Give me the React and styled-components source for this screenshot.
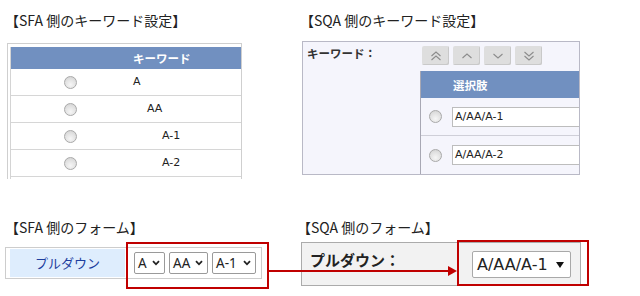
import React from "react";
import styled, { createGlobalStyle } from "styled-components";

const Global = createGlobalStyle`
  html, body { margin: 0; padding: 0; background: #fff; }
  body { font-family: "Noto Sans CJK JP", "Noto Sans", sans-serif; color: #222; }
  * { box-sizing: border-box; }
`;

const Page = styled.div`
  position: relative;
  width: 640px;
  height: 296px;
  overflow: hidden;
  padding-top: 12px;
`;

const Section = styled.div`
  display: grid;
  grid-template-columns: ${(p) => p.$left}px 1fr;
  height: ${(p) => p.$h}px;
  padding-top: ${(p) => p.$pt || 0}px;
`;

const Column = styled.div`
  display: flex;
  flex-direction: column;
  align-items: flex-start;
  padding-left: ${(p) => p.$pl || 0}px;
`;

const Title = styled.div`
  font-size: 14px;
  line-height: 16px;
  height: 16px;
  color: #222;
  white-space: nowrap;
`;

/* ---------- SFA keyword table ---------- */
const Frame = styled.div`
  margin-top: 15px;
  margin-left: 2px;
  width: 235px;
  height: 136px;
  border: 1px solid #cfcfcf;
  border-bottom: none;
  padding: 3px 0 0 2px;
  overflow: hidden;
`;

const KTable = styled.div`
  border-left: 1px solid #d4d4d4;
  height: 200px;
`;

const KRow = styled.div`
  display: grid;
  grid-template-columns: 118px 1fr;
  align-items: center;
  height: ${(p) => (p.$head ? 22 : 27)}px;
  background: ${(p) => (p.$head ? "#7190c0" : "#fff")};
  border-bottom: ${(p) => (p.$head ? "none" : "1px solid #d6d6d6")};
`;

const HeadText = styled.div`
  color: #fff;
  font-weight: 700;
  font-size: 11.5px;
  line-height: 14px;
  padding-left: ${(p) => p.$pl || 0}px;
  white-space: nowrap;
`;

const RadioCell = styled.div`
  display: flex;
  justify-content: center;
`;

const Radio = styled.span`
  display: inline-block;
  width: 13px;
  height: 13px;
  border-radius: 50%;
  border: 1px solid #a9a9a9;
  background: radial-gradient(circle at 50% 70%, #f6f6f6 0%, #e2e2e2 55%, #cfcfcf 100%);
  flex: none;
`;

const KeyText = styled.div`
  font-family: "DejaVu Sans", Verdana, sans-serif;
  font-size: 11px;
  line-height: 14px;
  color: #222;
  padding-left: ${(p) => 4 + p.$indent}px;
`;

/* ---------- SQA keyword box ---------- */
const SBox = styled.div`
  margin-top: 13px;
  margin-left: 2px;
  width: 278px;
  height: 134px;
  border: 1px solid #b9b9c6;
  background: #f5f5fc;
  display: grid;
  grid-template-columns: 117px 1fr;
  overflow: hidden;
`;

const SLabel = styled.div`
  font-size: 11.5px;
  font-weight: 700;
  line-height: 14px;
  padding: 4px 0 0 4px;
  color: #333;
  white-space: nowrap;
`;

const SRight = styled.div`
  display: flex;
  flex-direction: column;
  min-width: 0;
`;

const BtnRow = styled.div`
  display: flex;
  gap: 4px;
  padding: 4px 0 0 2px;
  height: 29px;
`;

const OrderBtn = styled.div`
  width: 27px;
  height: 19px;
  border-radius: 2px;
  background: #dedede;
  box-shadow: inset -1px -1px 0 #c9c9c9;
  display: flex;
  align-items: center;
  justify-content: center;
`;

const STable = styled.div`
  border-left: 1px solid #a8a8b4;
  flex: 1;
  width: 240px;
`;

const SHead = styled.div`
  height: 27px;
  background: #7190c0;
  display: flex;
  align-items: center;
`;

const SRow = styled.div`
  height: 38px;
  display: flex;
  align-items: center;
  gap: 10px;
  padding-left: 8px;
  border-bottom: ${(p) => (p.$last ? "none" : "1px solid #cfcfd8")};
`;

const TextInput = styled.div`
  width: 200px;
  height: 20px;
  border: 1px solid #bdbdbd;
  background: #fff;
  font-family: "DejaVu Sans", Verdana, sans-serif;
  font-size: 11px;
  line-height: 18px;
  padding-left: 2px;
  color: #222;
  flex: none;
`;

/* ---------- SFA form ---------- */
const FormA = styled.div`
  margin-top: 12px;
  width: 257px;
  height: 32px;
  border: 1px solid #cdcdcd;
  padding: 1px 0 1px 4px;
  display: flex;
  align-items: stretch;
`;

const FormALabel = styled.div`
  width: 115px;
  background: #deedfd;
  color: #1d3e9e;
  font-size: 13px;
  display: flex;
  align-items: center;
  justify-content: center;
  padding-bottom: 2px;
`;

const SelectGroup = styled.div`
  display: flex;
  align-items: center;
  gap: 4px;
  margin-left: 9px;
`;

const MiniSelect = styled.div`
  width: ${(p) => p.$w}px;
  height: 22px;
  border: 1px solid #9a9a9a;
  border-radius: 2px;
  background: #fff;
  display: flex;
  align-items: center;
  justify-content: space-between;
  padding: 0 4px 0 3px;
  font-family: "Noto Sans", "DejaVu Sans", sans-serif;
  font-size: 13.5px;
  color: #222;
`;

/* ---------- SQA form ---------- */
const FormB = styled.div`
  margin-top: 7px;
  margin-left: 4px;
  width: 280px;
  height: 44px;
  border: 1px solid #ababab;
  background: #f2f2f2;
  display: flex;
  align-items: flex-start;
`;

const FormBLabel = styled.div`
  width: 170px;
  padding: 7px 0 0 8px;
  font-size: 15px;
  font-weight: 700;
  line-height: 20px;
  color: #222;
  white-space: nowrap;
`;

const BigSelect = styled.div`
  margin-top: 8px;
  width: 99px;
  height: 27px;
  border: 1px solid #a9a9a9;
  border-radius: 2px;
  background: #fff;
  display: flex;
  align-items: center;
  justify-content: space-between;
  padding: 0 6px 0 4px;
  font-family: "DejaVu Sans", Verdana, sans-serif;
  font-size: 16px;
  color: #222;
`;

const Overlay = styled.svg`
  position: absolute;
  left: 0;
  top: 0;
  pointer-events: none;
`;

const Chevron = ({ up, double }) => (
  <svg width="12" height="10" viewBox="0 0 12 10">
    {(double ? [0, 4] : [2]).map((o) => (
      <polyline
        key={o}
        points={up ? `1.5,${o + 5} 6,${o + 1} 10.5,${o + 5}` : `1.5,${o + 1} 6,${o + 5} 10.5,${o + 1}`}
        fill="none"
        stroke="#8c8c8c"
        strokeWidth="1.1"
      />
    ))}
  </svg>
);

const SmallDown = () => (
  <svg width="8" height="6" viewBox="0 0 8 6">
    <polyline points="1,1.2 4,4.3 7,1.2" fill="none" stroke="#222" strokeWidth="1.8" />
  </svg>
);

const Tri = () => (
  <svg width="8" height="6" viewBox="0 0 8 6">
    <polygon points="0,0 8,0 4,6" fill="#111" />
  </svg>
);

const keywords = [
  { t: "A", i: 0 },
  { t: "AA", i: 14 },
  { t: "A-1", i: 29 },
  { t: "A-2", i: 29 },
];

export default function App() {
  return (
    <>
      <Global />
      <Page>
        <Section $left={290} $h={200}>
          <Column $pl={5}>
            <Title>【SFA 側のキーワード設定】</Title>
            <Frame>
              <KTable>
                <KRow $head>
                  <div />
                  <HeadText $pl={4}>キーワード</HeadText>
                </KRow>
                {keywords.map((k) => (
                  <KRow key={k.t}>
                    <RadioCell>
                      <Radio />
                    </RadioCell>
                    <KeyText $indent={k.i}>{k.t}</KeyText>
                  </KRow>
                ))}
              </KTable>
            </Frame>
          </Column>
          <Column $pl={10}>
            <Title>【SQA 側のキーワード設定】</Title>
            <SBox>
              <SLabel>キーワード：</SLabel>
              <SRight>
                <BtnRow>
                  <OrderBtn><Chevron up double /></OrderBtn>
                  <OrderBtn><Chevron up /></OrderBtn>
                  <OrderBtn><Chevron /></OrderBtn>
                  <OrderBtn><Chevron double /></OrderBtn>
                </BtnRow>
                <STable>
                  <SHead>
                    <HeadText $pl={32}>選択肢</HeadText>
                  </SHead>
                  <SRow>
                    <Radio />
                    <TextInput>A/AA/A-1</TextInput>
                  </SRow>
                  <SRow $last>
                    <Radio />
                    <TextInput>A/AA/A-2</TextInput>
                  </SRow>
                </STable>
              </SRight>
            </SBox>
          </Column>
        </Section>
        <Section $left={290} $h={84} $pt={7}>
          <Column $pl={5}>
            <Title>【SFA 側のフォーム】</Title>
            <FormA>
              <FormALabel>プルダウン</FormALabel>
              <SelectGroup>
                <MiniSelect $w={31}>A<SmallDown /></MiniSelect>
                <MiniSelect $w={39}>AA<SmallDown /></MiniSelect>
                <MiniSelect $w={44}>A-1<SmallDown /></MiniSelect>
              </SelectGroup>
            </FormA>
          </Column>
          <Column $pl={7}>
            <Title>【SQA 側のフォーム】</Title>
            <FormB>
              <FormBLabel>プルダウン：</FormBLabel>
              <BigSelect>A/AA/A-1<Tri /></BigSelect>
            </FormB>
          </Column>
        </Section>
        <Overlay width="640" height="296" viewBox="0 0 640 296">
          <rect x="127" y="243" width="141" height="45" fill="none" stroke="#c00000" strokeWidth="2" />
          <rect x="458" y="241" width="130" height="44" fill="none" stroke="#c00000" strokeWidth="2" />
          <line x1="268" y1="271" x2="450" y2="271" stroke="#c00000" strokeWidth="2" />
          <polygon points="448,266 457,271 448,276" fill="#c00000" />
        </Overlay>
      </Page>
    </>
  );
}
